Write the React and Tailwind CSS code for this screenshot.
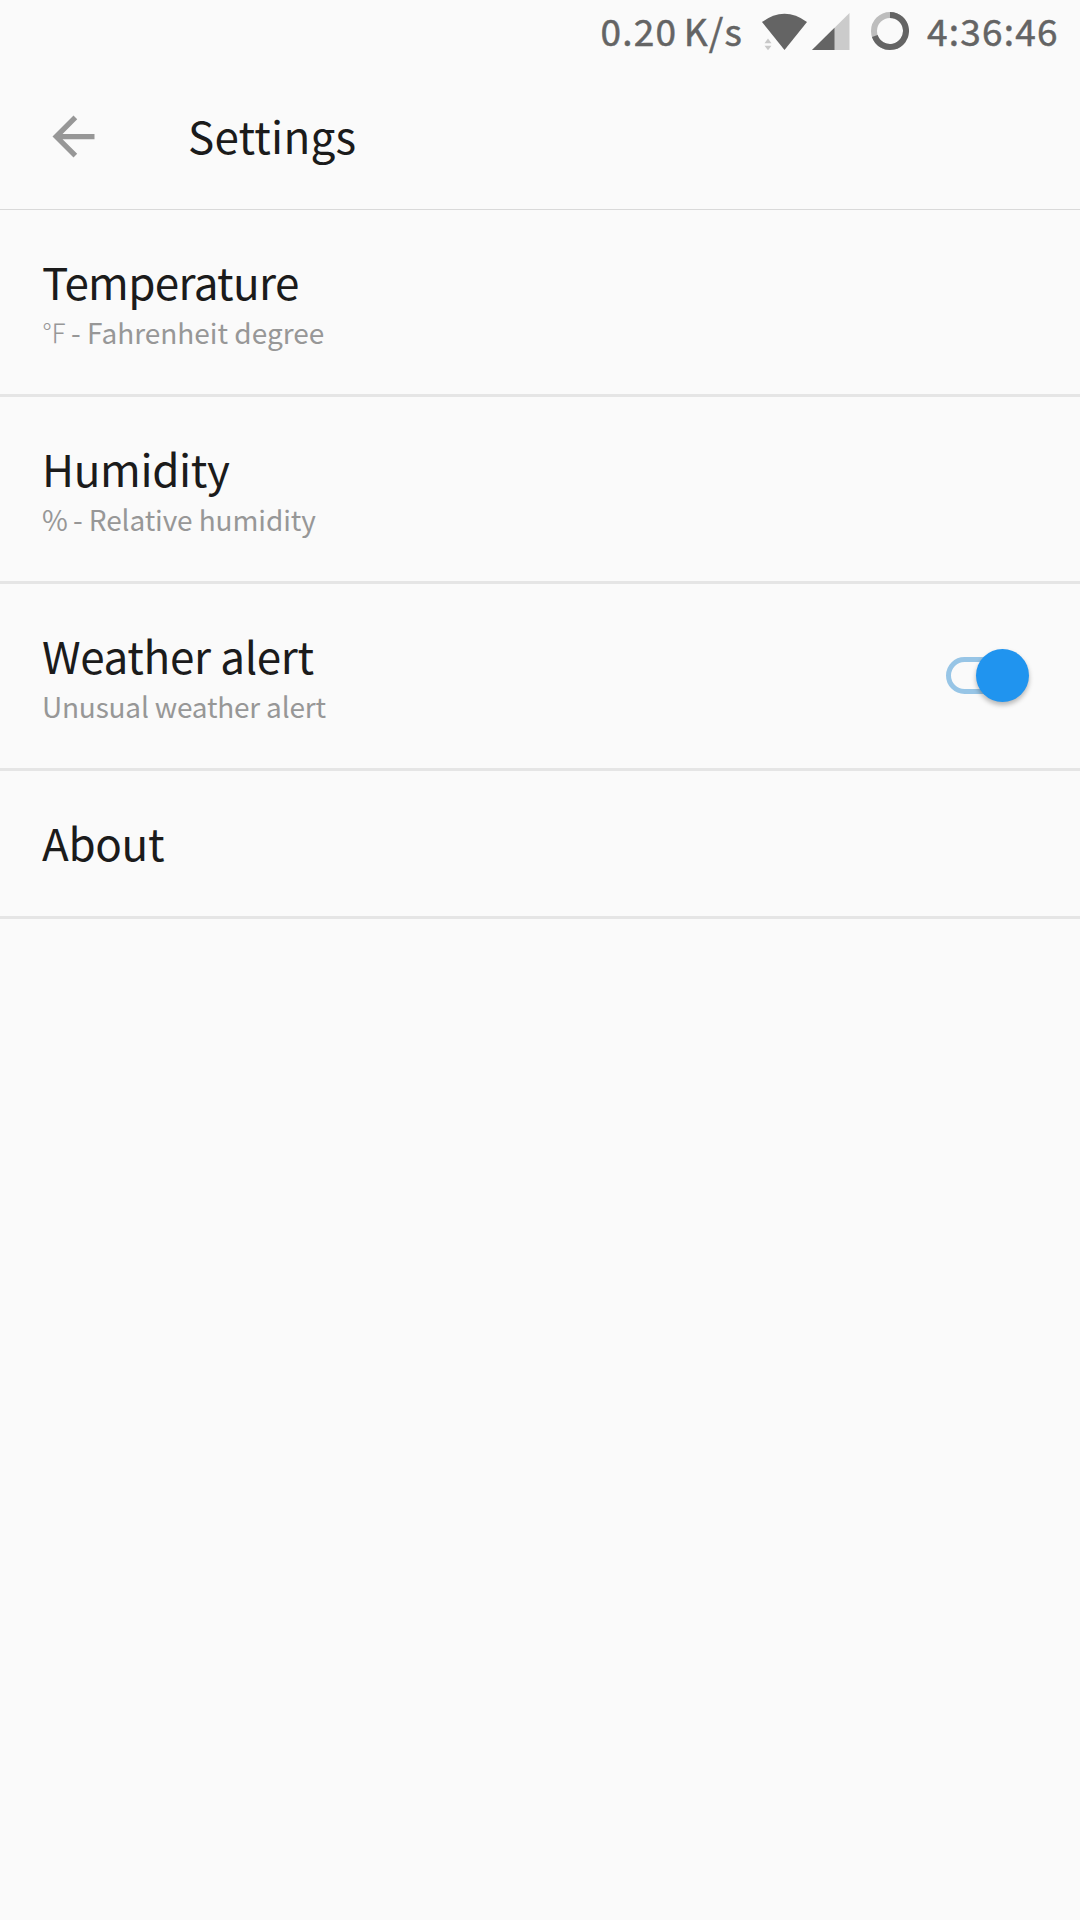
import React from 'react';

const settings = [
  { title: 'Temperature', unit: '℉', unitStyle: 'w-[30px] -ml-px text-[26px] font-light', summary: '- Fahrenheit degree', titleTracking: 'tracking-[-0.68px]', summaryTracking: 'tracking-[0px]' },
  { title: 'Humidity', unit: '%', unitStyle: 'w-[31px]', summary: '- Relative humidity', titleTracking: 'tracking-[-0.35px]', summaryTracking: 'tracking-[-0.1px]' },
  { title: 'Weather alert', summary: 'Unusual weather alert', titleTracking: 'tracking-[-0.35px]', summaryTracking: 'tracking-[-0.2px]', toggle: true },
  { title: 'About', titleTracking: 'tracking-[-0.35px]' },
];

const StatusBar = () => (
  <div className="h-16 flex items-start justify-end pr-[21px] text-[#646464] text-[37px] [-webkit-text-stroke:0.5px_#646464]">
    <span className="leading-[61px] mr-[17px] tracking-[1.2px] [word-spacing:-3px] whitespace-nowrap">0.20 K/s</span>
    <svg className="w-[90px] h-16 shrink-0" viewBox="760 0 90 64">
      <path d="M762 22Q784.500 5.500 807 22L784.500 50Z" fill="#646464" />
      <path d="M764.500 43.200L768 38.500L771.500 43.200ZM764.500 45.800H771.500L768 50.300Z" fill="#c8c8c8" />
      <path d="M812 50L849.500 13V50Z" fill="#cbcbcb" />
      <path d="M812 50L834.500 27.800V50Z" fill="#646464" />
    </svg>
    <svg className="w-[38px] h-16 ml-[21px] shrink-0" viewBox="871 0 38 64">
      <circle cx="890" cy="31" r="16" fill="none" stroke="#bdbdbd" strokeWidth="6" />
      <path d="M890 15A16 16 0 1 1 874.800 36" fill="none" stroke="#646464" strokeWidth="6" />
    </svg>
    <span className="w-[132px] ml-[18px] leading-[61px] tracking-[1.2px] whitespace-nowrap">4:36:46</span>
  </div>
);

const Header = () => (
  <header className="h-[146px] flex items-center pl-[42px] border-b border-[#d9d9d9]">
    <svg className="w-[63px] h-[63px] shrink-0" viewBox="0 0 24 24" fill="#979797">
      <path d="M20 11H7.830l5.590-5.590L12 4l-8 8 8 8 1.410-1.410L7.830 13H20v-2z" />
    </svg>
    <h1 className="ml-[83px] pb-[3px] text-[44px] leading-[60px] tracking-[0.2px] text-[#1b1b1b]">Settings</h1>
  </header>
);

const Toggle = () => (
  <div className="relative w-[83px] h-[53px] flex items-center">
    <div className="w-[70px] h-[37px] rounded-full border-[5px] border-[#97c5e6]" />
    <div className="absolute right-0 top-0 size-[53px] rounded-full bg-[#2094ef] shadow-[0_3px_5px_rgba(0,0,0,0.28)]" />
  </div>
);

const SettingRow = ({ item }) => (
  <div className={`flex justify-between pl-[42px] pr-[51px] border-b-[3px] border-[#e5e5e5] ${item.summary ? 'h-[187px]' : 'h-[148px]'}`}>
    <div className="pt-[42px] whitespace-nowrap">
      <div className={`text-[44px] leading-[58px] text-[#1b1b1b] ${item.titleTracking}`}>{item.title}</div>
      {item.summary && (
        <div className="mt-[2px] flex text-[28px] leading-[40px] text-[#979797]">
          {item.unit && <span className={item.unitStyle}>{item.unit}</span>}
          <span className={item.summaryTracking}>{item.summary}</span>
        </div>
      )}
    </div>
    {item.toggle && (
      <div className="pt-[65px]">
        <Toggle />
      </div>
    )}
  </div>
);

const App = () => (
  <div className="w-full min-h-screen bg-[#fafafa] font-['Noto_Sans_CJK_SC',sans-serif]">
    <StatusBar />
    <Header />
    <main>
      {settings.map((item) => (
        <SettingRow key={item.title} item={item} />
      ))}
    </main>
  </div>
);

export default App;
